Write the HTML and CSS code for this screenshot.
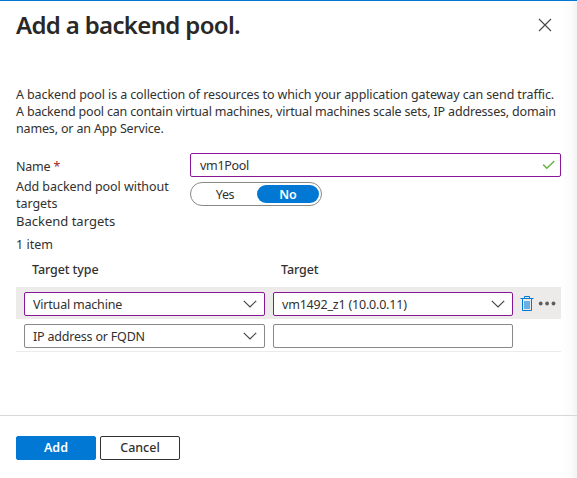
FILE: index.html
```html
<!DOCTYPE html>
<html lang="en">
<head>
<meta charset="utf-8">
<title>Add a backend pool.</title>
<link rel="stylesheet" href="styles.css">
</head>
<body>
<main class="panel">
  <header class="header">
    <h1 class="title">Add a backend pool.</h1>
    <svg class="close" viewBox="0 0 14 14" width="14" height="14"><path d="M1 1L13 13M13 1L1 13"/></svg>
  </header>
  <p class="intro"><span class="line-a">A backend pool is a collection of resources to which your application gateway can send traffic.</span><br><span class="line-b">A backend pool can contain virtual machines, virtual machines scale sets, IP addresses, domain</span><br><span class="line-c">names, or an App Service.</span></p>
  <section class="form">
    <div class="labels">
      <label class="name-label">Name <span class="required">*</span></label>
      <span class="wrap-label">Add backend pool without<br>targets</span>
      <span class="targets-label">Backend targets</span>
    </div>
    <div class="controls">
      <div class="field valid">
        <span class="pool">vm1Pool</span>
        <svg class="check" viewBox="0 0 14 10" width="14" height="10"><path d="M1.2 4.6L4.8 8.2L12.3 1"/></svg>
      </div>
      <div class="toggle"><span class="option">Yes</span><span class="option on">No</span></div>
    </div>
  </section>
  <div class="count">1 item</div>
  <section class="table">
    <div class="row head"><span class="type-head">Target type</span><span class="target-head">Target</span></div>
    <div class="row selected">
      <div class="field select valid"><span class="value vm">Virtual machine</span><svg class="chevron" viewBox="0 0 14 8" width="14" height="8"><path d="M.8 .8L7 7L13.2 .8"/></svg></div>
      <div class="field select target valid"><span class="value address">vm1492_z1 (10.0.0.11)</span><svg class="chevron" viewBox="0 0 14 8" width="14" height="8"><path d="M.8 .8L7 7L13.2 .8"/></svg></div>
      <svg class="trash" viewBox="0 0 14 17" width="14" height="17"><path class="bin" d="M2.5 3V15.5H11.5V3M.5 3.5H13.5M4.5 3V1.5H9.5V3"/><path class="fill" d="M4 6H10V14H4Z"/></svg>
      <svg class="more" viewBox="0 0 18 5" width="18" height="5"><circle cx="2.7" cy="2.5" r="1.9"/><circle cx="9.1" cy="2.5" r="1.9"/><circle cx="15.5" cy="2.5" r="1.9"/></svg>
    </div>
    <div class="row">
      <div class="field select"><span class="value fqdn">IP address or FQDN</span><svg class="chevron" viewBox="0 0 14 8" width="14" height="8"><path d="M.8 .8L7 7L13.2 .8"/></svg></div>
      <div class="field select target"></div>
    </div>
  </section>
  <footer class="footer">
    <button class="button primary">Add</button>
    <button class="button">Cancel</button>
  </footer>
</main>
</body>
</html>
```
FILE: styles.css
```css
* { box-sizing: border-box; }
body {
  margin: 0;
  font: 12.5px/17px "Noto Sans", sans-serif;
  color: #323130;
  background: #fff;
}
.panel {
  height: 478px;
  display: flex;
  flex-direction: column;
  border-top: 1px solid #0078d4;
  background: linear-gradient(to right, #fff 561px, #fbfbfb 571px, #f3f3f3 577px);
  white-space: nowrap;
  overflow: hidden;
}
.header {
  height: 85px;
  padding: 8px 25px 0 16px;
  display: flex;
  justify-content: space-between;
  align-items: flex-start;
}
.title {
  margin: 0;
  font-size: 24px;
  line-height: 32px;
  font-weight: 600;
  color: #292827;
  letter-spacing: -0.66px;
}
.close { margin-top: 9px; fill: none; stroke: #484644; stroke-width: 1.1; }
.intro { margin: 0 16px; height: 66px; }
.line-a { letter-spacing: -0.107px; }
.line-b { letter-spacing: -0.18px; }
.line-c { letter-spacing: -0.16px; }
.form { display: flex; padding-left: 16px; height: 84px; }
.labels { width: 174px; padding-top: 6px; display: flex; flex-direction: column; }
.name-label { height: 20px; letter-spacing: -0.2px; }
.wrap-label { height: 35px; letter-spacing: -0.06px; }
.targets-label { font-size: 13px; }
.required { color: #a4262c; }
.controls { width: 371px; padding-top: 1px; }
.field {
  height: 24px;
  padding: 0 4px 0 9px;
  display: flex;
  align-items: center;
  justify-content: space-between;
  border: 1px solid #8a8886;
  border-radius: 2px;
  background: #fff;
}
.valid { border-color: #881798; }
.pool { letter-spacing: -0.3px; }
.check { fill: none; stroke: #6bb341; stroke-width: 1.5; }
.toggle {
  width: 132px;
  height: 24px;
  margin-top: 5px;
  padding: 2px;
  display: flex;
  border: 1px solid #8a8886;
  border-radius: 12px;
}
.option { width: 64px; text-align: center; line-height: 19px; letter-spacing: -0.4px; }
.on { width: 62px; height: 18px; border-radius: 9px; background: #0078d4; color: #fff; font-weight: 600; letter-spacing: 0; }
.count { padding-left: 16px; height: 17px; }
.table { width: 545px; margin-left: 16px; height: 99px; border-bottom: 1px solid #edebe9; }
.row { height: 32px; padding-left: 8px; display: flex; align-items: center; }
.head { height: 34px; padding: 0 0 2px 16px; font-weight: 500; letter-spacing: -0.1px; }
.type-head { width: 249px; }
.selected { background: #edebe9; }
.select { width: 241px; margin-top: 2px; padding: 0 7.5px 0 8px; }
.value { letter-spacing: -0.2px; }
.target { width: 240px; margin-left: 8px; }
.chevron { fill: none; stroke: #484644; stroke-width: 1.2; }
.trash { margin-left: 7px; }
.bin { fill: none; stroke: #0078d4; }
.fill { fill: #69afe5; }
.more { margin-left: 4px; fill: #605e5c; }
.footer { margin-top: 63px; height: 63px; padding: 20px 16px 0; display: flex; gap: 4px; border-top: 1px solid #d8d8d8; }
.button {
  width: 80px;
  height: 24px;
  padding: 0;
  font: 500 12.5px/20px "Noto Sans", sans-serif;
  color: #323130;
  background: #fff;
  border: 1px solid #323130;
  border-radius: 2px;
}
.primary { color: #fff; font-weight: 600; background: #0078d4; border-color: #0078d4; }
```
